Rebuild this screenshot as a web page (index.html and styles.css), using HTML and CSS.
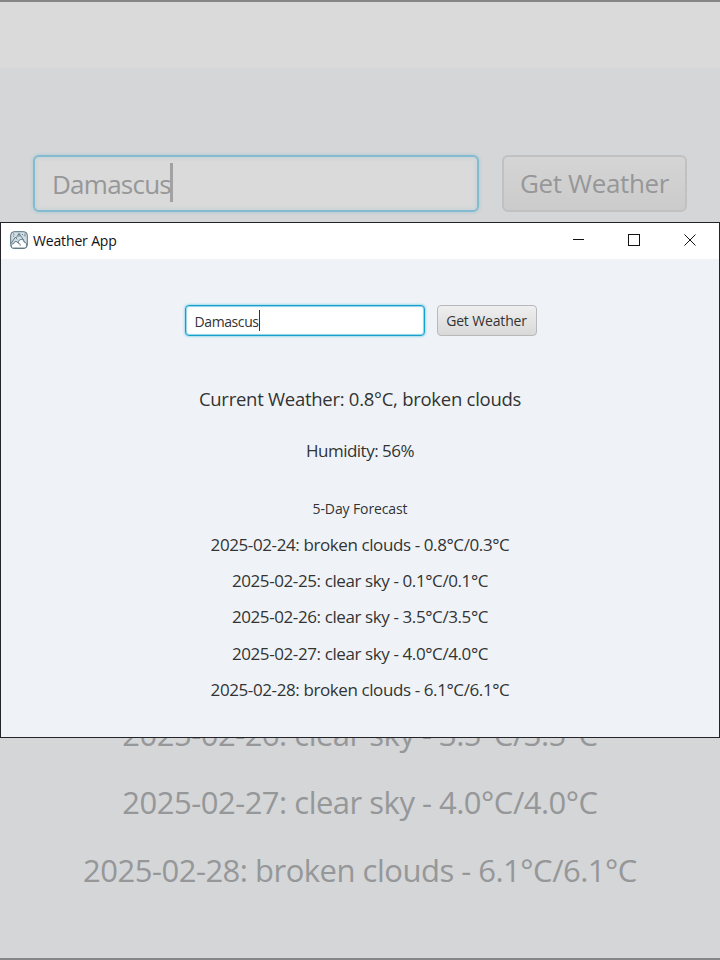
FILE: index.html
```
<!DOCTYPE html>
<html lang="en">
<head>
<meta charset="utf-8">
<title>Weather App</title>
<link rel="stylesheet" href="styles.css">
</head>
<body>
<div class="backdrop backdrop-top">
  <div class="backdrop-title"></div>
  <div class="backdrop-search">
    <div class="big-input"><span>Damascus</span><i class="big-caret"></i></div>
    <div class="big-button">Get Weather</div>
  </div>
</div>
<main class="window">
  <header class="titlebar">
    <svg class="app-icon" width="18" height="18" viewBox="0 0 18 18" fill="none" stroke="#55707d" stroke-width="1">
      <rect x=".7" y=".7" width="16.6" height="16.6" rx="3.5" fill="#d3dee4"/>
      <path d="M1 12.5 5.3 6.2 7.2 8.4M6.3 6.7 9 2.5l5 7M9 2.5v3.2M3 2.5l1.5 1.2M12 3l1 1.2M15 2.5v3M3 5.5l1-.8" stroke-width=".9"/>
      <path d="M1.2 16c0-2 .7-3.3 2.5-3.4.4-1.9 1.9-2.5 3.2-1.8.5.2.9.7 1.1 1.2.5-2.6 1.8-3.7 3.7-3.5 1.5.2 2.3 1.2 2.4 2.6 1.7.1 2.6 1.2 2.7 2.8 0 1.7-.9 3.2-2.6 3.2H3.5c-1.3 0-2.1-.4-2.3-1.1Z" fill="#fff"/>
      <path d="M8 12c1.6.2 2.3 1.2 2.2 2.6"/>
    </svg>
    <h1 class="app-title">Weather App</h1>
    <svg class="controls" width="124" height="12" viewBox="0 0 124 12" fill="none" stroke="#111">
      <path d="M1 5.5h11"/>
      <rect x="56.5" y=".5" width="11" height="11"/>
      <path d="m112.5.5 11 11m0-11-11 11"/>
    </svg>
  </header>
  <div class="search">
    <div class="input"><span>Damascus</span><i class="caret"></i></div>
    <button class="button">Get Weather</button>
  </div>
  <p class="current">Current Weather: 0.8°C, broken clouds</p>
  <p class="humidity">Humidity: 56%</p>
  <h2 class="heading">5-Day Forecast</h2>
  <ul class="forecast">
    <li>2025-02-24: broken clouds - 0.8°C/0.3°C</li>
    <li>2025-02-25: clear sky - 0.1°C/0.1°C</li>
    <li>2025-02-26: clear sky - 3.5°C/3.5°C</li>
    <li>2025-02-27: clear sky - 4.0°C/4.0°C</li>
    <li>2025-02-28: broken clouds - 6.1°C/6.1°C</li>
  </ul>
</main>
<div class="backdrop backdrop-bottom">
  <ul class="big-forecast">
    <li>2025-02-26: clear sky - 3.5°C/3.5°C</li>
    <li>2025-02-27: clear sky - 4.0°C/4.0°C</li>
    <li>2025-02-28: broken clouds - 6.1°C/6.1°C</li>
  </ul>
</div>
</body>
</html>
```
FILE: styles.css
```
* { box-sizing: border-box; margin: 0; padding: 0; }
body {
  width: 720px;
  height: 960px;
  overflow: hidden;
  font-family: "Open Sans", "Noto Sans", sans-serif;
  color: #333;
}
ul { list-style: none; }

.backdrop { background: #d4d6d8; color: #969798; overflow: hidden; }
.backdrop-top { height: 222px; border-top: 2px solid #868686; }
.backdrop-title { height: 66px; background: #dadada; }
.backdrop-search { display: flex; padding: 87px 33px 0; gap: 23px; }
.big-input {
  display: flex;
  align-items: center;
  width: 446px;
  height: 57px;
  padding: 1px 0 0 17px;
  border: 2px solid #83bbd0;
  border-radius: 6px;
  background: #dadada;
  box-shadow: 0 0 3px 1px #b9ccd3, inset 0 0 4px 1px #c5d3d8;
  font-size: 26px;
  letter-spacing: -.75px;
}
.big-caret { width: 3px; height: 39px; margin: -3px 0 0 -1px; background: #a2a2a2; }
.big-button {
  width: 185px;
  height: 57px;
  border: 2px solid #c1c1c1;
  border-radius: 6px;
  background: linear-gradient(#d5d5d5, #cbcbcb);
  text-align: center;
  font-size: 26px;
  line-height: 52px;
  letter-spacing: -.35px;
}

.window {
  height: 516px;
  border: 1px solid #242428;
  background: #eff3f8;
}
.titlebar {
  display: flex;
  align-items: center;
  height: 36px;
  padding: 0 23px 2px 9px;
  background: #fff;
  color: #111;
}
.app-title {
  flex: 1;
  padding-left: 5px;
  font-size: 14px;
  font-weight: 400;
  letter-spacing: -.15px;
}
.search {
  display: flex;
  justify-content: center;
  gap: 12px;
  margin-top: 46px;
  padding-left: 1px;
}
.input {
  display: flex;
  align-items: center;
  width: 240px;
  height: 31px;
  padding: 1px 0 0 9px;
  border: 1px solid #16a0cc;
  border-radius: 4px;
  background: #fff;
  box-shadow: 0 0 2px 1px #a5daeb, inset 0 0 1px 1px #8fd1e6;
  font-size: 14px;
  letter-spacing: -.4px;
}
.caret { width: 1px; height: 21px; margin-top: -2px; background: #333; }
.button {
  width: 100px;
  height: 31px;
  border: 1px solid #b7b8b9;
  border-radius: 4px;
  background: linear-gradient(#efefef, #d9d9d9);
  color: #333;
  font: 14px "Open Sans", "Noto Sans", sans-serif;
  letter-spacing: -.15px;
}
.current, .humidity, .heading { text-align: center; font-weight: 400; }
.current { margin-top: 47px; font-size: 18.5px; line-height: 32px; letter-spacing: -.27px; }
.humidity { margin-top: 21px; font-size: 17px; line-height: 30px; letter-spacing: -.52px; }
.heading { margin-top: 31px; font-size: 14px; line-height: 24px; letter-spacing: -.12px; }
.forecast { margin-top: 5.5px; }
.forecast li {
  height: 36.4px;
  text-align: center;
  font-size: 17px;
  line-height: 36.4px;
  letter-spacing: -.4px;
}

.backdrop-bottom { height: 222px; border-bottom: 2px solid #868686; }
.big-forecast { margin-top: -38px; }
.big-forecast li {
  height: 68px;
  text-align: center;
  font-size: 31px;
  line-height: 68px;
  letter-spacing: -.5px;
}
```
